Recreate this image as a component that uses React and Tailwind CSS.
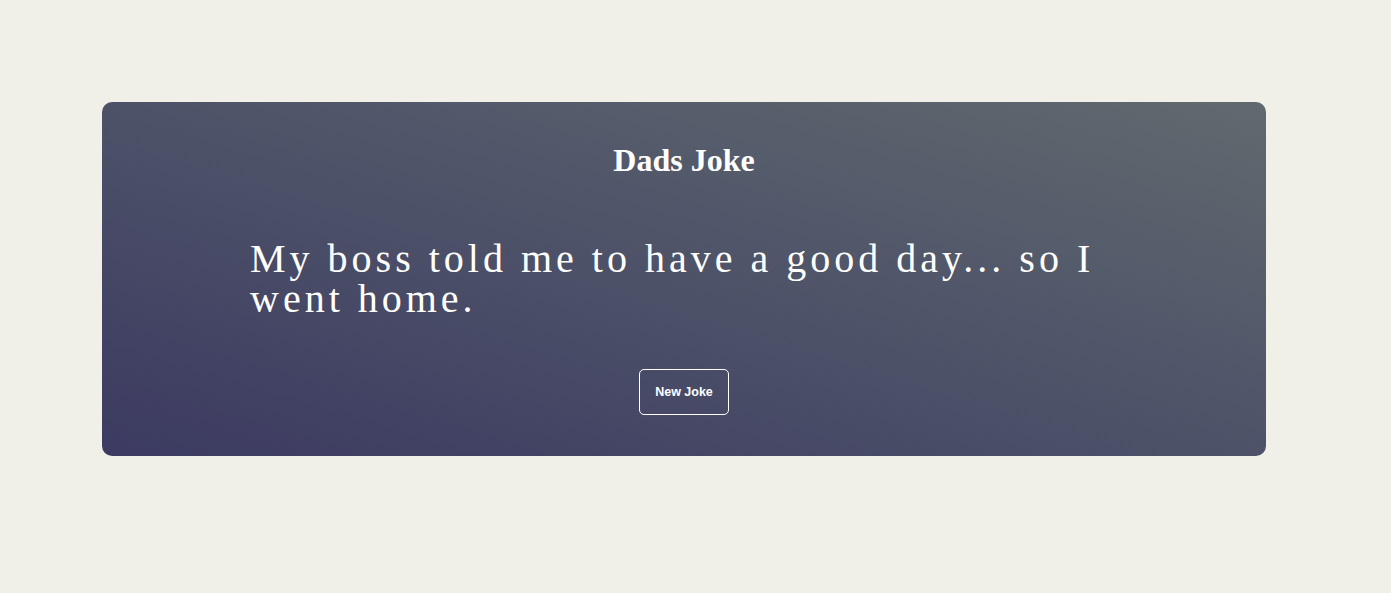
export default function App() {
  return (
    <div className="min-h-[593px] bg-[#f0efe8] pt-[102px]">
      <div className="ml-[102px] w-[1164px] h-[354px] rounded-[10px] bg-linear-to-tr from-[#3c3a61] to-[#606a6e] pt-10 flex flex-col items-center text-white">
        <h1 className="font-['Liberation_Serif',serif] text-[32px] font-bold leading-[37px]">Dads Joke</h1>
        <p className="mt-[60px] w-full px-[148px] font-['Liberation_Serif',serif] text-[40px] leading-[40px] tracking-[4px]">
          My boss told me to have a good day... so I went home.
        </p>
        <button className="mt-[50px] h-[46px] px-[15px] rounded-[5px] border border-white bg-transparent font-['Liberation_Sans',Arial,sans-serif] text-[12.5px] font-bold text-white">
          New Joke
        </button>
      </div>
    </div>
  );
}
